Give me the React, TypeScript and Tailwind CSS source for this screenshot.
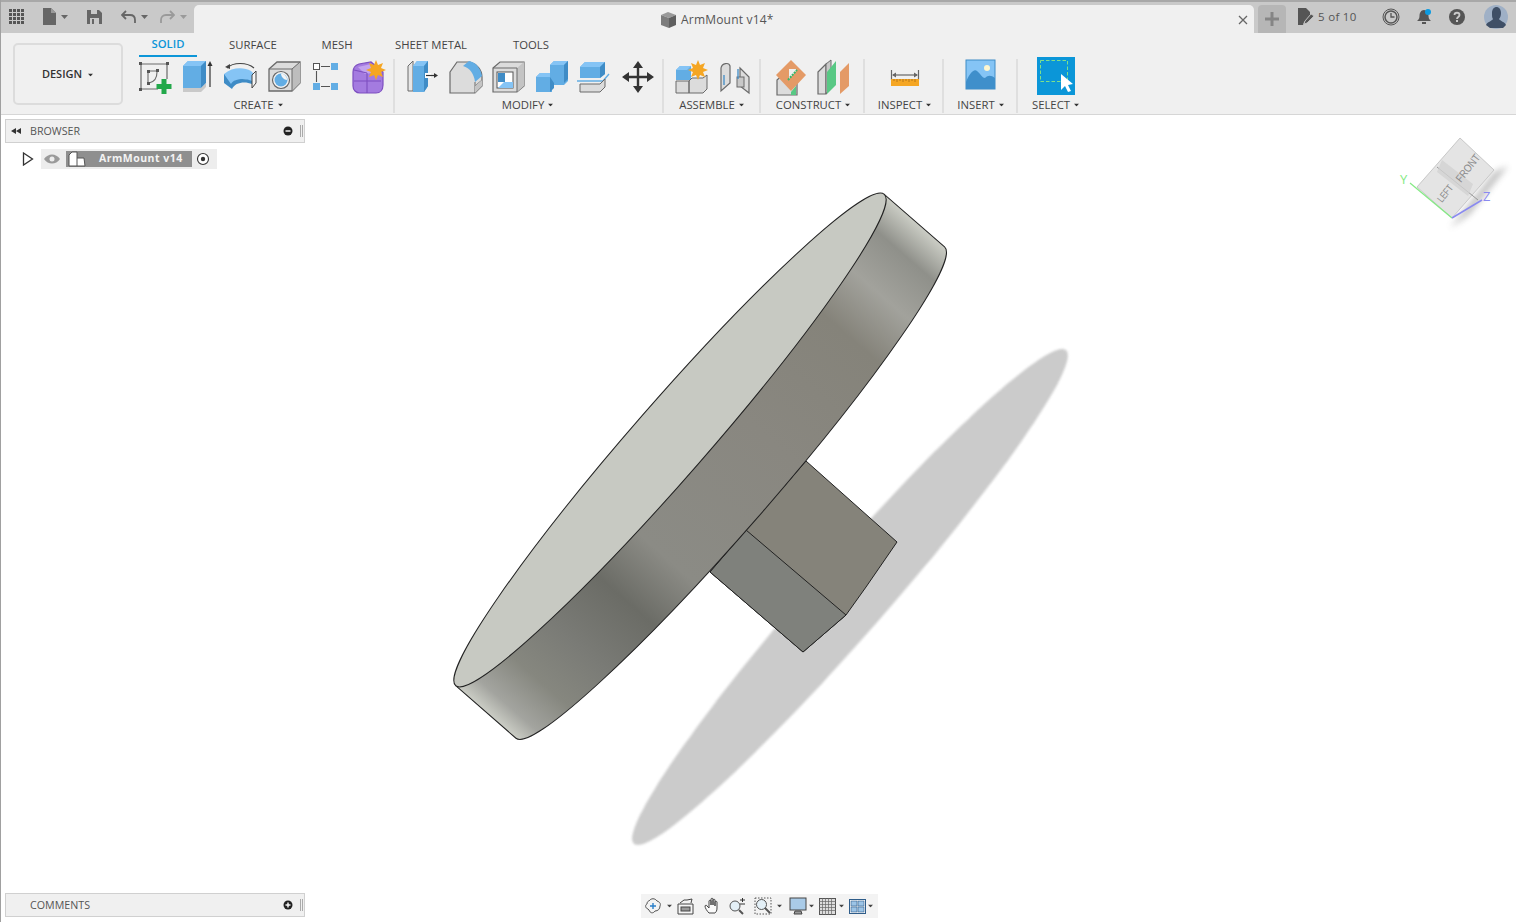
import React from 'react';

const BLUE = '#62ade4';
const LIGHT = '#85c4f5';
const DARK = '#3f8cc6';
const GRAY = '#dcdcdc';
const LINE = '#6a6a6a';

const Caret: React.FC<{ className?: string }> = ({ className }) => (
  <svg width="7" height="4" viewBox="0 0 7 4" className={className}>
    <path d="M0 0h7L3.5 4z" fill="currentColor" />
  </svg>
);

const Tool: React.FC<{ children: React.ReactNode }> = ({ children }) => (
  <svg width="36" height="36" viewBox="0 0 36 36" className="shrink-0 mx-[3.5px] overflow-visible">
    {children}
  </svg>
);

const Group: React.FC<{ label: string; className: string; labelClass?: string; children: React.ReactNode }> = ({ label, className, labelClass, children }) => (
  <div className={`flex flex-col items-center shrink-0 h-[54px] border-r-2 border-[#dfdfdf] ${className}`}>
    <div className="flex h-[36px]">{children}</div>
    <div className={`flex items-center gap-[3px] mt-[3px] text-[11.3px] leading-[14px] text-[#444] ${labelClass ?? ''}`}>
      {label}
      <Caret className="text-[#333] scale-75" />
    </div>
  </div>
);

const SketchIcon = () => (
  <Tool>
    <path d="M4 5h26M4 5v25M4 30h17M30 5v15" stroke={LINE} strokeWidth="1.2" fill="none" />
    {[[3, 4], [30, 4], [3, 30]].map(([x, y]) => (
      <rect key={x * 100 + y} x={x - 1} y={y - 1} width="3" height="3" fill="#555" />
    ))}
    <path d="M11 12h9M11 13v11M20 13c0 7-3 10-8 11" stroke={LINE} strokeWidth="1.1" fill="none" />
    <rect x="10" y="11" width="3" height="3" fill="#555" />
    <rect x="19" y="10" width="3" height="3" fill="#555" />
    <rect x="10" y="23" width="3" height="3" fill="#555" />
    <path d="M24.5 20h5v5h5v5h-5v5h-5v-5h-5v-5h5z" fill="#22a84a" />
  </Tool>
);

const ExtrudeIcon = () => (
  <Tool>
    <path d="M3 7l5-5h18v22l-5 5H3z" fill={BLUE} />
    <path d="M3 7l5-5h18l-5 5z" fill={LIGHT} />
    <path d="M21 7l5-5v22l-5 5z" fill={DARK} />
    <path d="M3 29h18l5-5v4l-5 5H3z" fill="#c9c9c9" />
    <path d="M30 28V5" stroke="#333" strokeWidth="1.2" />
    <path d="M27.5 7L30 2l2.500 5z" fill="#333" />
  </Tool>
);

const RevolveIcon = () => (
  <Tool>
    <path d="M4 9C10 3 24 3 31 9" stroke="#444" strokeWidth="1.200" fill="none" />
    <path d="M2 8l5-3 0 5z" fill="#444" />
    <path d="M1 15c8-7 20-7 27-3l4 4-3 7C23 19 11 19 8 27l-7-6z" fill={LIGHT} />
    <path d="M1 15v9l8 6c3-7 13-8 20-5v-3C23 19 11 19 8 25z" fill={DARK} />
    <path d="M29 16l4-4v12l-4 5z" fill="#f5f5f5" stroke="#444" strokeWidth="1" />
  </Tool>
);

const HoleIcon = () => (
  <Tool>
    <path d="M3 10l8-7h23v21l-8 8H3z" fill="#dcdcdc" stroke={LINE} strokeWidth="1.300" />
    <path d="M26 10l8-7v21l-8 8z" fill="#bdbdbd" />
    <path d="M3 10h23v22M26 10l8-7" stroke={LINE} strokeWidth="1" fill="none" />
    <circle cx="15" cy="21" r="8.500" fill="#f2f2f2" stroke="#666" strokeWidth="1.200" />
    <circle cx="15" cy="21" r="6.500" fill={BLUE} />
    <path d="M15 14.500a6.500 6.500 0 0 1 6 6.500c-3 0-6-3-6-6.500z" fill="#f4f4f4" />
  </Tool>
);

const PatternIcon = () => (
  <Tool>
    <rect x="4.500" y="4.500" width="6" height="6" fill="#fff" stroke="#555" />
    <rect x="22" y="4" width="7" height="7" fill={BLUE} />
    <rect x="4" y="24" width="7" height="7" fill={BLUE} />
    <rect x="22" y="24" width="7" height="7" fill={BLUE} />
    <path d="M12 7.500h9M12 27.500h9M7.500 12v11" stroke="#555" strokeWidth="1.100" />
  </Tool>
);

const FormIcon = () => (
  <Tool>
    <path d="M1 13c0-4 3-7 6-8l12-2 12 10v13c0 5-3 8-7 8H8c-4 0-7-3-7-7z" fill="#a47be0" stroke="#7d4fc0" strokeWidth="1.200" />
    <path d="M6 8l13-3 9 8-15 2z" fill="#c3a4ee" />
    <path d="M2 22h27M15 14v20M15 14L2 11" stroke="#7d4fc0" strokeWidth="1.100" fill="none" />
    <path d="M24 1l2 5 5-2-2 5 5 2-5 2 2 5-5-2-2 5-2-5-5 2 2-5-5-2 5-2-2-5 5 2z" fill="#f5a623" />
  </Tool>
);

const PressPullIcon = () => (
  <Tool>
    <path d="M3 7l5-5v30H3z" fill="#e6e6e6" stroke={LINE} />
    <path d="M8 7l4-5h11v25l-4 6H8z" fill={BLUE} />
    <path d="M8 7l4-5h11l-4 5z" fill={LIGHT} />
    <path d="M19 7l4-5v25l-4 6z" fill={DARK} />
    <rect x="20" y="14" width="6" height="5" fill="#fff" />
    <path d="M21 16.500h9" stroke="#333" strokeWidth="1.200" />
    <path d="M29 14l4 2.500-4 2.500z" fill="#333" />
  </Tool>
);

const FilletIcon = () => (
  <Tool>
    <path d="M2 13L9 3h13c7 2 12 8 12 15v9l-7 7H2z" fill={GRAY} stroke={LINE} strokeWidth="1.200" />
    <path d="M15 7l6-5c7 1 12 8 13 15l-7 6c-1-8-5-14-12-16z" fill={BLUE} />
    <path d="M27 23v11M27 27l7-6" stroke={LINE} strokeWidth="1" fill="none" />
    <path d="M27 27l7-6v6l-7 7z" fill="#c4c4c4" />
  </Tool>
);

const ShellIcon = () => (
  <Tool>
    <path d="M2 9l7-6h24v24l-7 6H2z" fill="#dcdcdc" stroke={LINE} strokeWidth="1.200" />
    <path d="M26 9l7-6v24l-7 6z" fill="#c4c4c4" />
    <path d="M2 9h24v24" stroke={LINE} fill="none" />
    <rect x="6" y="13" width="16" height="16" fill="#fff" stroke="#555" />
    <rect x="7" y="14" width="7" height="9" fill={DARK} />
    <path d="M7 29l6-6h9v6z" fill={LIGHT} />
  </Tool>
);

const CombineIcon = () => (
  <Tool>
    <path d="M2 18l4-4h10V6l4-4h14v20l-4 4H18v7l-4 0H2z" fill={BLUE} />
    <path d="M16 6l4-4h14l-4 4zM2 18l4-4h10v4z" fill={LIGHT} />
    <path d="M30 6l4-4v18l-4 4zM16 18v15l4-4v-5z" fill={DARK} />
  </Tool>
);

const SplitIcon = () => (
  <Tool>
    <path d="M3 8l5-5h20v12l-5 4H3z" fill={BLUE} />
    <path d="M3 8l5-5h20l-5 5z" fill={LIGHT} />
    <path d="M23 8l5-5v12l-5 4z" fill={DARK} />
    <path d="M0 22h26l6-7" stroke={BLUE} strokeWidth="1.400" fill="none" />
    <path d="M3 25h20l5-5v8l-5 5H3z" fill={GRAY} stroke={LINE} />
  </Tool>
);

const MoveIcon = () => (
  <Tool>
    <path d="M18 7v22M7 18h22" stroke="#333" strokeWidth="2.400" />
    <path d="M18 2l5 7H13zM18 34l5-7H13zM2 18l7-5v10zM34 18l-7-5v10z" fill="#333" />
  </Tool>
);

const NewComponentIcon = () => (
  <Tool>
    <path d="M2 11l4-4h11l0 14H2z" fill={BLUE} />
    <path d="M2 11l4-4h11l-4 4z" fill={LIGHT} />
    <path d="M2 22h13v12H2zM15 22l3-3h11l4-3v14l-4 4H15z" fill={GRAY} stroke={LINE} />
    <path d="M24 1l2 5 5-2-2 5 5 2-5 2 2 5-5-2-2 5-2-5-5 2 2-5-5-2 5-2-2-5 5 2z" fill="#f5a623" />
  </Tool>
);

const JointIcon = () => (
  <Tool>
    <path d="M4 32V9c1-5 8-6 9-2v17z" fill={GRAY} stroke={LINE} strokeWidth="1.200" />
    <path d="M23 9l9 9v16l-9-7z" fill={GRAY} stroke={LINE} strokeWidth="1.200" />
    <rect x="20" y="18" width="7" height="10" fill="#c8c8c8" stroke={LINE} />
    <path d="M21 10v10M7 16v10" stroke={DARK} strokeWidth="1.300" />
  </Tool>
);

const ConstructIcon = () => (
  <Tool>
    <path d="M4 21l8-7h12v22H4z" fill={GRAY} stroke={LINE} strokeWidth="1.200" />
    <path d="M18 1l15 15-15 16L3 16z" fill="#e49a66" />
    <path d="M16 20l7-8v-2h-7z" fill="#f0f0f0" />
    <path d="M15 21l9-10" stroke="#35b86b" strokeWidth="2" strokeDasharray="2 1" />
    <path d="M18 33l5-6v9h-5z" fill="#58c884" />
  </Tool>
);

const PlaneIcon = () => (
  <Tool>
    <path d="M2 13l8-8v30H2z" fill={GRAY} stroke={LINE} strokeWidth="1.200" />
    <path d="M10 5l5-4v26l-5 8z" fill="#c8c8c8" stroke={LINE} />
    <path d="M11 13l9-11v24l-9 9z" fill="#58c884" />
    <path d="M24 13l9-9v23l-9 8z" fill="#e49a66" />
  </Tool>
);

const MeasureIcon = () => (
  <Tool>
    <path d="M4.500 11v10M31.500 11v10" stroke="#666" strokeWidth="1.200" />
    <path d="M6 16h24" stroke="#666" strokeWidth="1.200" />
    <path d="M5 16l4-2.500v5zM31 16l-4-2.500v5z" fill="#666" />
    <rect x="4" y="20" width="28" height="7" fill="#f5a623" />
    <path d="M7 20v2M10 20v3M13 20v2M16 20v3M19 20v2M22 20v3M25 20v2M28 20v3" stroke="#b5761a" strokeWidth="1" />
  </Tool>
);

const InsertIcon = () => (
  <Tool>
    <rect x="3" y="1" width="29" height="29" fill={LIGHT} stroke={DARK} strokeWidth="1" />
    <circle cx="24" cy="9" r="3" fill="#fdf6d0" />
    <path d="M3 23c3-8 8-14 11-11 3 2 5 7 8 7 3-3 6-3 10 0v11H3z" fill="#3f8fcb" />
  </Tool>
);

const SelectIcon = () => (
  <Tool>
    <rect x="-1" y="-2" width="38" height="38" fill="#0b96d8" />
    <rect x="2.500" y="1.500" width="27" height="21" fill="none" stroke="#7fe08a" strokeWidth="1" strokeDasharray="3.500 2" />
    <path d="M23 15v16l4-4 3 6 3-1-3-6 5-1z" fill="#fff" />
  </Tool>
);

// viewport picture: all coordinates are page pixels
const Model = () => (
  <svg width="1515" height="807" viewBox="1 115 1515 807" className="absolute inset-0">
    <defs>
      <linearGradient id="side" gradientUnits="userSpaceOnUse" x1="-326" y1="0" x2="326" y2="0">
        <stop offset="0" stopColor="#cbcdc5" />
        <stop offset="0.03" stopColor="#a3a49f" />
        <stop offset="0.09" stopColor="#86877f" />
        <stop offset="0.17" stopColor="#7a7b76" />
        <stop offset="0.27" stopColor="#6b6c66" />
        <stop offset="0.36" stopColor="#8b8b85" />
        <stop offset="0.6" stopColor="#898780" />
        <stop offset="0.8" stopColor="#85837a" />
        <stop offset="0.88" stopColor="#a2a29c" />
        <stop offset="0.95" stopColor="#8f908a" />
        <stop offset="1" stopColor="#cbcdc5" />
      </linearGradient>
    </defs>
    <ellipse cx="850" cy="597" rx="328" ry="37" transform="rotate(-48.8 850 597)" fill="#cbcbcb" className="blur-[1px]" />
    <path d="M806 461L897 542L866 587L846 615L803 652L710 572L746 530z" fill="#85837a" stroke="#222" strokeWidth="1" />
    <path d="M746 530L846 615L803 652L710 572z" fill="#7f817c" stroke="#222" strokeWidth="1" />
    <g transform="translate(670 440) rotate(-48.9)">
      <path d="M-326 0L-326 80A326 37 0 0 0 326 80L326 0z" fill="url(#side)" stroke="#222" strokeWidth="1" />
      <ellipse cx="0" cy="0" rx="326" ry="37" fill="#c7c9c2" stroke="#222" strokeWidth="1" />
    </g>
    {/* view cube */}
    <path d="M1494 172L1508 166L1470 214L1450 228z" fill="#777" opacity="0.45" className="blur-[3px]" />
    <path d="M1460 138L1494 170L1452 218L1417 187z" fill="#e4e4e4" stroke="#c8c8c8" />
    <path d="M1437 167L1478 200" stroke="#999" />
    <path d="M1442 160L1473 184L1468 196L1437 172z" fill="#d2d2d2" opacity="0.8" />
    <text x="0" y="0" transform="translate(1461 183) rotate(-52)" fontSize="11" textLength="32" lengthAdjust="spacingAndGlyphs" fill="#8a8a8a" fontFamily="'Liberation Sans', sans-serif">FRONT</text>
    <text x="0" y="0" transform="translate(1442 203) rotate(-52)" fontSize="10" textLength="19" lengthAdjust="spacingAndGlyphs" fill="#8a8a8a" fontFamily="'Liberation Sans', sans-serif">LEFT</text>
    <path d="M1410 183L1452 218" stroke="#84ea84" strokeWidth="1.200" />
    <path d="M1452 218L1482 200" stroke="#8a8af0" strokeWidth="1.500" />
    <text x="1400" y="184" fontSize="13" fill="#84ea84" fontFamily="'Open Sans', sans-serif">Y</text>
    <text x="1483" y="201" fontSize="13" fill="#8a8af0" fontFamily="'Open Sans', sans-serif">Z</text>
  </svg>
);

const PanelHeader: React.FC<{ title: string; plus?: boolean; collapse?: boolean }> = ({ title, plus, collapse }) => (
  <div className="flex items-center h-[24px] w-[300px] bg-[#f0f0f0] border border-[#d0d0d0] text-[10.7px] text-[#555]">
    <div className="w-[24px] flex justify-center">
      {collapse && (
        <svg width="10" height="6" viewBox="0 0 10 6" className="-ml-[5px]">
          <path d="M0 3l5-3v6zM5 3l5-3v6z" fill="#333" />
        </svg>
      )}
    </div>
    <span>{title}</span>
    <svg width="10" height="10" viewBox="0 0 10 10" className="ml-auto">
      <circle cx="5" cy="5" r="4.500" fill="#222" />
      <path d="M2.500 5h5" stroke="#fff" strokeWidth="1.400" />
      {plus && <path d="M5 2.500v5" stroke="#fff" strokeWidth="1.400" />}
    </svg>
    <div className="ml-[7px] mr-[1px] w-[3px] h-[12px] border-l border-r border-[#aaa]" />
  </div>
);

const NavCaret = () => <Caret className="text-[#444] scale-75 mx-[1px]" />;

const App: React.FC = () => {
  return (
    <div className="relative flex flex-col w-[1516px] h-[922px] overflow-hidden bg-white border-l border-[#a0a0a0] font-['Open_Sans',sans-serif]">
      {/* title bar */}
      <div className="flex h-[33px] shrink-0 bg-[#c9c9c9] border-t-2 border-[#a8a8a8] text-[#555]">
        <div className="flex items-center w-[193px] shrink-0 pb-[2px]">
          <div className="grid grid-cols-4 gap-[1px] ml-[8px]">
            {Array.from({ length: 16 }).map((_, i) => (
              <div key={i} className="w-[3px] h-[3px] bg-[#555]" />
            ))}
          </div>
          <svg width="15" height="17" viewBox="0 0 15 17" className="ml-[18px]">
            <path d="M1 0h8l5 5v12H1z" fill="#666" />
            <path d="M9 0l5 5H9z" fill="#9a9a9a" />
          </svg>
          <Caret className="ml-[4px] text-[#666]" />
          <svg width="15" height="15" viewBox="0 0 15 15" className="ml-[19px]">
            <path d="M0 1h12l3 3v11H0z" fill="#666" />
            <path d="M4 1h6v4H4zM3 9h9v6H3z" fill="#c9c9c9" />
            <path d="M5 10h2v5H5z" fill="#666" />
          </svg>
          <svg width="15" height="14" viewBox="0 0 15 14" className="ml-[19px]">
            <path d="M5 1L1 5l4 4M1 5h8c3 0 5 2 5 5v3" stroke="#666" strokeWidth="1.800" fill="none" />
          </svg>
          <Caret className="ml-[5px] text-[#666]" />
          <svg width="15" height="14" viewBox="0 0 15 14" className="ml-[12px]">
            <path d="M10 1l4 4-4 4M14 5H6C3 5 1 7 1 10v3" stroke="#9a9a9a" strokeWidth="1.800" fill="none" />
          </svg>
          <Caret className="ml-[5px] text-[#9a9a9a]" />
        </div>
        <div className="flex items-center w-[1060px] shrink-0 mt-[3px] pt-[1px] bg-[#f0f0f0] rounded-t-[5px]">
          <svg width="17" height="16" viewBox="0 0 17 16" className="ml-[466px]">
            <path d="M1 3l7-3 8 3-7 3z" fill="#999" />
            <path d="M1 3l8 3v10l-8-3z" fill="#7c7c7c" />
            <path d="M9 6l7-3v10l-7 3z" fill="#5f5f5f" />
          </svg>
          <span className="ml-[4px] text-[12px] tracking-[0.2px] text-[#555]">ArmMount v14*</span>
          <svg width="10" height="10" viewBox="0 0 10 10" className="ml-auto mr-[6px]">
            <path d="M1 1l8 8M9 1l-8 8" stroke="#666" strokeWidth="1.300" />
          </svg>
        </div>
        <div className="flex items-center justify-center w-[28px] ml-[4px] mt-[3px] shrink-0 bg-[#b6b6b6] rounded-t-[4px]">
          <svg width="14" height="14" viewBox="0 0 14 14">
            <path d="M7 0v14M0 7h14" stroke="#858585" strokeWidth="3" />
          </svg>
        </div>
        <div className="flex items-center flex-1 pb-[2px]">
          <svg width="18" height="17" viewBox="0 0 18 17" className="ml-[11px]">
            <path d="M1 0h8l4 4v3l-6 7-1 3H1z" fill="#555" />
            <path d="M8 13l6-7 3 2-7 7-3 1z" fill="#555" stroke="#c9c9c9" strokeWidth="0.800" />
          </svg>
          <span className="ml-[3px] text-[11.500px] tracking-[0.3px] text-[#555]">5 of 10</span>
          <svg width="18" height="18" viewBox="0 0 18 18" className="ml-[25px]">
            <circle cx="9" cy="9" r="8" fill="none" stroke="#555" strokeWidth="1" />
            <circle cx="9" cy="9" r="6" fill="none" stroke="#555" strokeWidth="1.500" />
            <path d="M9 5v4h3.500" stroke="#555" strokeWidth="1.300" fill="none" />
          </svg>
          <svg width="18" height="18" viewBox="0 0 18 18" className="ml-[15px]">
            <path d="M9 2c3 0 4.500 3 4.500 6 0 3 1.500 4 2.500 5H2c1-1 2.500-2 2.500-5 0-3 1.500-6 4.500-6z" fill="#555" />
            <rect x="7" y="14" width="4" height="2" fill="#555" />
            <circle cx="13" cy="4" r="3" fill="#0d9be0" />
          </svg>
          <svg width="18" height="18" viewBox="0 0 18 18" className="ml-[15px]">
            <circle cx="9" cy="9" r="8" fill="#555" />
            <path d="M6.500 7c0-3 5-3 5 0 0 2-2.500 2-2.500 4" stroke="#c9c9c9" strokeWidth="1.800" fill="none" />
            <rect x="8" y="12" width="2" height="2" fill="#c9c9c9" />
          </svg>
          <svg width="24" height="24" viewBox="0 0 24 24" className="ml-[18px]">
            <circle cx="12" cy="12" r="12" fill="#9fb0c6" />
            <path d="M8 8c0-8 9-8 9 0 0 3-1 5-2 6 1 2 6 3 7 6l-3 3H6l-4-3c1-3 6-4 7-6-1-1-1-3-1-6z" fill="#3f4f66" />
          </svg>
        </div>
      </div>

      {/* ribbon */}
      <div className="flex h-[82px] shrink-0 bg-[#f0f0f0] border-b border-[#d6d6d6]">
        <div className="flex items-center justify-center gap-[5px] w-[110px] h-[62px] ml-[12px] mt-[10px] pt-[1px] shrink-0 border-2 border-[#dcdcdc] rounded-[5px] text-[11px] font-semibold text-[#333]">
          DESIGN
          <Caret className="text-[#333] scale-75" />
        </div>
        <div className="flex flex-col ml-[10px]">
          <div className="flex items-end h-[24px] text-[11.3px] text-[#444]">
            <div className="w-[58px] ml-[6px] h-[23px] flex items-center justify-center font-semibold text-[#0d96d8] border-b-2 border-[#0d96d8]">SOLID</div>
            <div className="w-[48px] ml-[32px] h-[23px] flex items-center justify-center">SURFACE</div>
            <div className="w-[30px] ml-[45px] h-[23px] flex items-center justify-center">MESH</div>
            <div className="w-[72px] ml-[43px] h-[23px] flex items-center justify-center whitespace-nowrap">SHEET METAL</div>
            <div className="w-[36px] ml-[46px] h-[23px] flex items-center justify-center">TOOLS</div>
          </div>
          <div className="flex mt-[2px]">
            <Group label="CREATE" className="w-[262px] pr-[2px]" labelClass="mr-[7px]">
              <SketchIcon />
              <ExtrudeIcon />
              <RevolveIcon />
              <HoleIcon />
              <PatternIcon />
              <FormIcon />
            </Group>
            <Group label="MODIFY" className="w-[269px] pl-[4px]" labelClass="mr-[5px]">
              <PressPullIcon />
              <FilletIcon />
              <ShellIcon />
              <CombineIcon />
              <SplitIcon />
              <MoveIcon />
            </Group>
            <Group label="ASSEMBLE" className="w-[97px] pl-[4px]" labelClass="mr-[3px]">
              <NewComponentIcon />
              <JointIcon />
            </Group>
            <Group label="CONSTRUCT" className="w-[104px]" labelClass="ml-[3px]">
              <ConstructIcon />
              <PlaneIcon />
            </Group>
            <Group label="INSPECT" className="w-[79px] pl-[3px]">
              <MeasureIcon />
            </Group>
            <Group label="INSERT" className="w-[74px] pl-[2px]">
              <InsertIcon />
            </Group>
            <div className="flex flex-col items-center w-[76px] shrink-0 h-[54px]">
              <div className="flex h-[36px]">
                <SelectIcon />
              </div>
              <div className="flex items-center gap-[3px] mt-[3px] text-[11.3px] leading-[14px] text-[#444]">
                SELECT
                <Caret className="text-[#333] scale-75" />
              </div>
            </div>
          </div>
        </div>
      </div>

      {/* viewport */}
      <div className="relative flex-1">
        <Model />
        <div className="absolute inset-y-0 left-[4px] flex flex-col justify-between pt-[4px] pb-[5px]">
          <div>
            <PanelHeader title="BROWSER" collapse />
            <div className="flex items-center mt-[6px] h-[20px]">
              <svg width="12" height="14" viewBox="0 0 12 14" className="ml-[17px]">
                <path d="M1.500 1l9 6-9 6z" fill="#fff" stroke="#333" strokeWidth="1.300" />
              </svg>
              <div className="flex items-center ml-[7px] w-[176px] h-[20px] bg-[#ededed]">
                <svg width="16" height="10" viewBox="0 0 16 10" className="ml-[3px]">
                  <path d="M0 5c4-6 12-6 16 0-4 6-12 6-16 0z" fill="#9a9a9a" />
                  <circle cx="8" cy="5" r="2.500" fill="#ededed" />
                </svg>
                <div className="relative flex items-center ml-[6px] w-[126px] h-[16px] bg-[#8f8f8f]">
                  <svg width="18" height="16" viewBox="0 0 18 16" className="ml-[2px]">
                    <path d="M1 4l3-3h5v6h7l1 8H1z" fill="#fff" stroke="#555" />
                    <path d="M9 7v8" stroke="#555" />
                  </svg>
                  <span className="ml-[13px] text-[10.500px] font-bold tracking-[0.5px] text-[#f3f3f3]">ArmMount v14</span>
                </div>
                <svg width="14" height="14" viewBox="0 0 14 14" className="ml-[4px]">
                  <circle cx="7" cy="7" r="5.500" fill="#fff" stroke="#333" strokeWidth="1.100" />
                  <circle cx="7" cy="7" r="2.200" fill="#333" />
                </svg>
              </div>
            </div>
          </div>
          <PanelHeader title="COMMENTS" plus />
        </div>
        <div className="absolute bottom-[4px] left-[640px] flex items-center w-[237px] h-[24px] pl-[3px] bg-[#f3f3f3]">
          <svg width="18" height="18" viewBox="0 0 18 18">
            <path d="M5 4c2-3 6-3 8 0 3 1 4 3 3 5 0 3-2 5-5 5-2 3-5 2-6-1l-1-1c-3-1-3-4-1-5 0-2 1-3 2-3z" fill="none" stroke="#555" />
            <path d="M9 6v6M6 9h6" stroke="#2a7fc9" strokeWidth="1.400" />
          </svg>
          <div className="ml-[3px]"><NavCaret /></div>
          <svg width="17" height="17" viewBox="0 0 17 17" className="ml-[3px]">
            <path d="M1 6h15v10H1z" fill="#f5f5f5" stroke="#444" />
            <rect x="4" y="9" width="9" height="4" fill="#999" stroke="#444" />
            <path d="M3 5l4-3h3l5-1-1 4" fill="none" stroke="#444" />
          </svg>
          <svg width="18" height="18" viewBox="0 0 18 18" className="ml-[10px]">
            <path d="M5 16c-2-2-4-5-4-7 0-1 2-1 2 0l2 2V4c0-1 2-1 2 0v4V2c0-1 2-1 2 0v6V3c0-1 2-1 2 0v6V5c0-1 2-1 2 0v6c0 3-1 4-2 5z" fill="#fafafa" stroke="#444" />
          </svg>
          <svg width="18" height="18" viewBox="0 0 18 18" className="ml-[6px]">
            <circle cx="7" cy="9" r="5" fill="#e4f0f7" stroke="#555" />
            <path d="M11 13l4 4" stroke="#555" strokeWidth="2" />
            <path d="M12 3h5M14.500 1v4M12 7h5" stroke="#333" />
          </svg>
          <svg width="18" height="18" viewBox="0 0 18 18" className="ml-[8px]">
            <rect x="1" y="1" width="16" height="16" fill="none" stroke="#555" strokeDasharray="1.500 1.500" />
            <circle cx="7.500" cy="7.500" r="5" fill="#e4f0f7" stroke="#555" />
            <path d="M11 11l5 5" stroke="#555" strokeWidth="2" />
          </svg>
          <div className="ml-[3px]"><NavCaret /></div>
          <svg width="18" height="18" viewBox="0 0 18 18" className="ml-[5px]">
            <rect x="1" y="1" width="16" height="12" fill="#a9cbe8" stroke="#444" />
            <path d="M6 14h6l1 3H5z" fill="#999" stroke="#444" />
          </svg>
          <NavCaret />
          <svg width="17" height="17" viewBox="0 0 17 17" className="ml-[3px]">
            <rect x="0.500" y="0.500" width="16" height="16" fill="#ddd" stroke="#555" />
            <path d="M3.500 0v17M6.500 0v17M9.500 0v17M12.500 0v17M0 3.500h17M0 6.500h17M0 9.500h17M0 12.500h17" stroke="#666" strokeWidth="0.700" />
          </svg>
          <div className="ml-[1px]"><NavCaret /></div>
          <svg width="17" height="15" viewBox="0 0 17 15" className="ml-[3px]">
            <rect x="0.500" y="0.500" width="16" height="14" fill="#fff" stroke="#2f5d8a" />
            <rect x="2" y="2" width="6" height="5" fill="#9cc4e6" stroke="#2f5d8a" strokeWidth="0.600" />
            <rect x="9" y="2" width="6" height="5" fill="#9cc4e6" stroke="#2f5d8a" strokeWidth="0.600" />
            <rect x="2" y="8" width="6" height="5" fill="#9cc4e6" stroke="#2f5d8a" strokeWidth="0.600" />
            <rect x="9" y="8" width="6" height="5" fill="#9cc4e6" stroke="#2f5d8a" strokeWidth="0.600" />
          </svg>
          <NavCaret />
        </div>
      </div>
    </div>
  );
};

export default App;
